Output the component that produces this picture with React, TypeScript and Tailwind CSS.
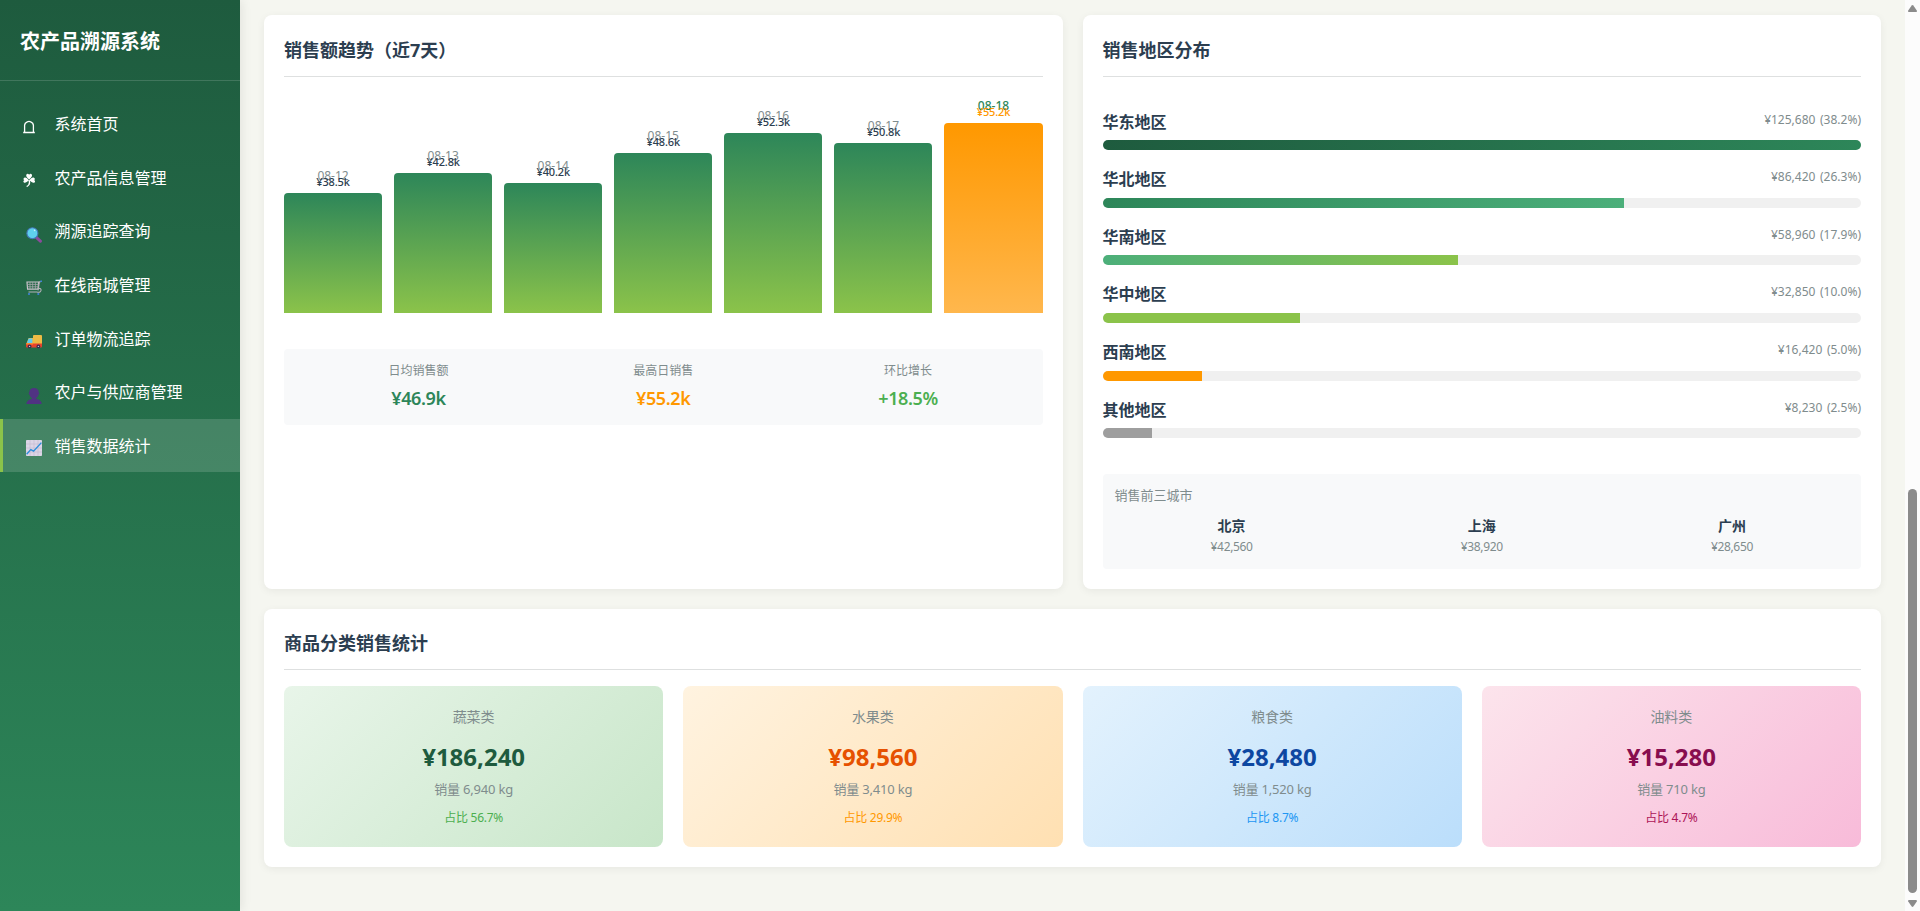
import type { ReactNode } from 'react';

const navItems: { label: string; icon: ReactNode }[] = [
  {
    label: '系统首页',
    icon: (
      <svg className="mt-[6px] h-4 w-4" viewBox="0 0 16 16" fill="none" stroke="#fff" strokeWidth="1.3">
        <path d="M0.2 14.5H11.8M1.6 14.5V7.2L2.3 5.2Q4.4 3.3 6 3.3T9.7 5.2L10.4 7.2V14.5" />
      </svg>
    ),
  },
  {
    label: '农产品信息管理',
    icon: (
      <svg className="mt-[4px] h-4 w-4" viewBox="0 0 16 16" fill="#fff">
        <g transform="translate(-0.6 0.5) scale(1.12)">
          <path d="M6 7.1C3.8 5.2 2.9 3.8 3.6 2.6C4.3 1.8 5.5 2 6 3C6.5 2 7.7 1.8 8.4 2.6C9.1 3.8 8.2 5.2 6 7.1Z" />
          <path d="M5.8 7.9C3.8 9.9 2.3 10.6 1.3 9.8C0.5 9 0.8 8 1.7 7.8C0.8 7.4 0.7 6.2 1.7 5.6C3 5 4.5 6.1 5.8 7.9Z" />
          <path d="M6.2 7.9C8.2 9.9 9.7 10.6 10.9 9.8C11.7 9 11.3 8 10.4 7.8C11.3 7.4 11.4 6.2 10.3 5.6C9 5 7.5 6.1 6.2 7.9Z" />
          <path d="M5.9 7.5C7 10.5 6 12.4 3.8 13.4" fill="none" stroke="#fff" strokeWidth="1.2" />
        </g>
      </svg>
    ),
  },
  {
    label: '溯源追踪查询',
    icon: (
      <svg className="mt-[8px] ml-[3px] h-4 w-4" viewBox="0 0 16 16">
        <path d="M10.3 10.3L14.4 14.2" stroke="#8b4a9c" strokeWidth="3" strokeLinecap="round" />
        <circle cx="6.4" cy="6.2" r="5.5" fill="#5fd0ee" stroke="#4677b8" strokeWidth="1.1" />
        <circle cx="8.6" cy="3.4" r="0.8" fill="#c5f1fb" />
      </svg>
    ),
  },
  {
    label: '在线商城管理',
    icon: (
      <svg className="mt-[8px] ml-[3px] h-4 w-4" viewBox="0 0 16 16" fill="none">
        <path d="M1 2H12.6L12 9.2H1.6Z" stroke="#c9c4cc" strokeWidth="1.2" />
        <path d="M4 2V9M6.7 2V9M9.4 2V9M1.3 4.4H12.5M1.5 6.8H12.2" stroke="#aaa7ad" strokeWidth="0.8" />
        <path d="M12 10.4L13.4 1.8H15M12.2 8.5Q15.5 8 15 10.5T10.8 12H2.5" stroke="#b6b1b9" strokeWidth="1.1" />
        <path d="M14.3 1.3H16" stroke="#3f82d8" strokeWidth="1.6" />
        <circle cx="3" cy="14" r="1.1" fill="#3f82d8" />
        <circle cx="12.3" cy="14" r="1.1" fill="#3f82d8" />
      </svg>
    ),
  },
  {
    label: '订单物流追踪',
    icon: (
      <svg className="mt-[9px] ml-[3px] h-4 w-4" viewBox="0 0 16 16">
        <path d="M7 2Q7 1 8 1H15Q16 1 16 2V10.4H7Z" fill="#edbb45" />
        <path d="M2.7 4H7V10.6H0.4V9.4Z" fill="#f2b23d" />
        <path d="M2.6 4.4H6.4V9H1Z" fill="#5dcdf2" />
        <path d="M0.2 9.6H16V12.2Q16 13.4 15 13.4H1Q0 13.4 0 12.4Z" fill="#e8422d" />
        <path d="M0.4 9H7V10.6H0.2Z" fill="#f98a2f" />
        <circle cx="3.6" cy="12.4" r="1.9" fill="#3a2c4f" />
        <circle cx="12.4" cy="12.4" r="1.9" fill="#3a2c4f" />
        <circle cx="3.6" cy="12.4" r="0.7" fill="#c8c2d2" />
        <circle cx="12.4" cy="12.4" r="0.7" fill="#c8c2d2" />
      </svg>
    ),
  },
  {
    label: '农户与供应商管理',
    icon: (
      <svg className="mt-[8px] ml-[3px] h-4 w-4" viewBox="0 0 16 16" fill="#503382">
        <path d="M8 0C11 0 12.9 1.6 12.7 4.5C13.5 4.5 13.4 6.5 12.4 6.7C12 8.6 11 9.4 10.2 10V11C13.8 11.5 15.5 13.2 15.7 16H0.4C0.6 13.2 2.3 11.5 5.8 11V10C5 9.4 4 8.6 3.6 6.7C2.6 6.5 2.5 4.5 3.3 4.5C3.1 1.6 5 0 8 0Z" />
      </svg>
    ),
  },
  {
    label: '销售数据统计',
    icon: (
      <svg className="mt-[6px] ml-[3px] h-4 w-4" viewBox="0 0 16 16" fill="none">
        <rect width="16" height="16" rx="0.8" fill="#dcd5e6" />
        <path d="M4 0V16M8 0V16M12 0V16M0 4H16M0 8H16M0 12H16" stroke="#c3b9d0" strokeWidth="0.6" />
        <path d="M0.6 14.2L4.8 9.6L7.6 11.2L15.4 2.6" stroke="#2c8edb" strokeWidth="1.4" />
      </svg>
    ),
  },
];

const days = [
  { date: '08-12', value: '¥38.5k', height: 120 },
  { date: '08-13', value: '¥42.8k', height: 140 },
  { date: '08-14', value: '¥40.2k', height: 130 },
  { date: '08-15', value: '¥48.6k', height: 160 },
  { date: '08-16', value: '¥52.3k', height: 180 },
  { date: '08-17', value: '¥50.8k', height: 170 },
  { date: '08-18', value: '¥55.2k', height: 190, today: true },
];

const summary = [
  { label: '日均销售额', value: '¥46.9k', color: 'text-[#2d8659]' },
  { label: '最高日销售', value: '¥55.2k', color: 'text-[#ff9800]' },
  { label: '环比增长', value: '+18.5%', color: 'text-[#4caf50]' },
];

const regions = [
  { name: '华东地区', value: '¥125,680 (38.2%)', width: 100, fill: 'bg-[linear-gradient(90deg,#1e5b3e,#2d8659)]' },
  { name: '华北地区', value: '¥86,420 (26.3%)', width: 68.8, fill: 'bg-[linear-gradient(90deg,#2d8659,#4caf7a)]' },
  { name: '华南地区', value: '¥58,960 (17.9%)', width: 46.9, fill: 'bg-[linear-gradient(90deg,#4caf7a,#8bc34a)]' },
  { name: '华中地区', value: '¥32,850 (10.0%)', width: 26.1, fill: 'bg-[#8bc34a]' },
  { name: '西南地区', value: '¥16,420 (5.0%)', width: 13.1, fill: 'bg-[#ff9800]' },
  { name: '其他地区', value: '¥8,230 (2.5%)', width: 6.5, fill: 'bg-[#9e9e9e]' },
];

const cities = [
  { name: '北京', value: '¥42,560' },
  { name: '上海', value: '¥38,920' },
  { name: '广州', value: '¥28,650' },
];

const categories = [
  { name: '蔬菜类', amount: '¥186,240', qty: '销量 6,940 kg', share: '占比 56.7%', bg: 'bg-[linear-gradient(135deg,#e8f5e9,#c8e6c9)]', strong: 'text-[#1e5b3e]', accent: 'text-[#4caf50]' },
  { name: '水果类', amount: '¥98,560', qty: '销量 3,410 kg', share: '占比 29.9%', bg: 'bg-[linear-gradient(135deg,#fff3e0,#ffe0b2)]', strong: 'text-[#e65100]', accent: 'text-[#ff9800]' },
  { name: '粮食类', amount: '¥28,480', qty: '销量 1,520 kg', share: '占比 8.7%', bg: 'bg-[linear-gradient(135deg,#e3f2fd,#bbdefb)]', strong: 'text-[#0d47a1]', accent: 'text-[#2196f3]' },
  { name: '油料类', amount: '¥15,280', qty: '销量 710 kg', share: '占比 4.7%', bg: 'bg-[linear-gradient(135deg,#fce4ec,#f8bbd9)]', strong: 'text-[#880e4f]', accent: 'text-[#ad1457]' },
];

function Sidebar() {
  return (
    <aside className="z-10 flex w-60 shrink-0 flex-col bg-[linear-gradient(180deg,#1e5b3e,#2d8659)] text-white shadow-[2px_0_10px_rgba(0,0,0,0.08)]">
      <h1 className="h-[81px] border-b border-white/15 px-5 pt-[26px] text-xl leading-8 font-bold">农产品溯源系统</h1>
      <nav className="mt-4 flex flex-col gap-px">
        {navItems.map((item, i) => (
          <a
            key={item.label}
            className={
              i === navItems.length - 1
                ? 'flex h-[52.67px] items-center border-l-[3px] border-[#8bc34a] bg-white/15 pl-5'
                : 'flex h-[52.67px] items-center border-l-[3px] border-transparent pl-5'
            }
          >
            <span className="flex w-[31.5px] shrink-0">{item.icon}</span>
            <span className="pt-[1.4px] text-base leading-6">{item.label}</span>
          </a>
        ))}
      </nav>
    </aside>
  );
}

function Card({ title, tight, children }: { title: string; tight?: boolean; children: ReactNode }) {
  return (
    <section className="flex min-w-0 flex-1 flex-col rounded-lg bg-white p-5 shadow-[0_2px_8px_rgba(0,0,0,0.06)]">
      <h2
        className={
          tight
            ? 'h-[41px] border-b border-[#dee0e0] text-lg leading-[29px] font-bold text-[#2c3e50]'
            : 'h-[42px] border-b border-[#dee0e0] text-lg leading-[31px] font-bold text-[#2c3e50]'
        }
      >
        {title}
      </h2>
      {children}
    </section>
  );
}

function TrendCard() {
  return (
    <Card title="销售额趋势（近7天）">
      <div className="flex h-[236px] items-end gap-3">
        {days.map((d) => (
          <div
            key={d.date}
            className={
              d.today
                ? 'relative flex-1 rounded-t bg-[linear-gradient(180deg,#ff9800,#ffb74d)]'
                : 'relative flex-1 rounded-t bg-[linear-gradient(180deg,#2d8659,#8bc34a)]'
            }
            style={{ height: d.height }}
          >
            <span
              className={
                d.today
                  ? 'absolute inset-x-0 -top-[27px] text-center text-xs leading-[19px] font-medium text-[#2d8659]'
                  : 'absolute inset-x-0 -top-[27px] text-center text-xs leading-[19px] text-[#7f8c8d]'
              }
            >
              {d.date}
            </span>
            <span
              className={
                d.today
                  ? 'absolute inset-x-0 -top-5 text-center text-[11px] leading-[18px] font-medium tracking-[-0.15px] text-[#ff9800]'
                  : 'absolute inset-x-0 -top-5 text-center text-[11px] leading-[18px] font-medium tracking-[-0.15px] text-[#2c3e50]'
              }
            >
              {d.value}
            </span>
          </div>
        ))}
      </div>
      <div className="mt-9 flex h-[76px] rounded bg-[#f8f9fa] px-3 pt-3 text-center">
        {summary.map((s) => (
          <div key={s.label} className="flex-1">
            <div className="text-xs leading-[19px] text-[#7f8c8d]">{s.label}</div>
            <div className={`mt-1 text-lg leading-[29px] font-semibold tracking-[-0.4px] ${s.color}`}>{s.value}</div>
          </div>
        ))}
      </div>
    </Card>
  );
}

function RegionCard() {
  return (
    <Card title="销售地区分布">
      <div className="mt-[31.6px] flex flex-col gap-4">
        {regions.map((r) => (
          <div key={r.name} className="flex flex-col gap-[6px]">
            <div className="flex h-[25.6px] items-start justify-between">
              <span className="text-base leading-[26.6px] font-semibold text-[#2c3e50]">{r.name}</span>
              <span className="pt-px text-xs leading-[20px] [word-spacing:1.5px] text-[#7f8c8d]">{r.value}</span>
            </div>
            <div className="h-[10px] overflow-hidden rounded-[5px] bg-[#f0f0f0]">
              <div className={`h-full ${r.fill}`} style={{ width: `${r.width}%` }} />
            </div>
          </div>
        ))}
      </div>
      <div className="mt-auto h-[95px] rounded bg-[#f8f9fa] p-3 text-[#7f8c8d]">
        <div className="text-[13px] leading-[19px]">销售前三城市</div>
        <div className="mt-[10px] flex gap-4 text-center">
          {cities.map((c) => (
            <div key={c.name} className="flex-1">
              <div className="text-sm leading-[22px] font-bold text-[#2c3e50]">{c.name}</div>
              <div className="text-xs leading-[19px] tracking-[-0.35px]">{c.value}</div>
            </div>
          ))}
        </div>
      </div>
    </Card>
  );
}

function CategoryCard() {
  return (
    <Card title="商品分类销售统计" tight>
      <div className="mt-4 grid grid-cols-4 gap-5">
        {categories.map((c) => (
          <div key={c.name} className={`flex h-[161px] flex-col items-center rounded-lg pt-5 text-[#7f8c8d] ${c.bg}`}>
            <div className="text-sm leading-[22px]">{c.name}</div>
            <div className={`mt-[10px] text-2xl leading-[38px] font-bold ${c.strong}`}>{c.amount}</div>
            <div className="mt-[3px] text-[13px] leading-[21px] tracking-[-0.2px]">{c.qty}</div>
            <div className={`mt-2 text-xs leading-[19px] tracking-[-0.25px] ${c.accent}`}>{c.share}</div>
          </div>
        ))}
      </div>
    </Card>
  );
}

function Scrollbar() {
  return (
    <div className="flex w-[15px] shrink-0 flex-col items-center bg-[#fcfcfc]">
      <svg className="mt-[5px] h-[7px] w-[9px] shrink-0" viewBox="0 0 9 7" fill="#8b8b8b">
        <path d="M3.7 0.5Q4.5 -0.3 5.3 0.5L8.8 5.5Q9.2 7 8 7H1Q-0.2 7 0.2 5.5Z" />
      </svg>
      <div className="mt-[477px] h-[404px] w-[9px] shrink-0 rounded-full bg-[#8b8b8b]" />
      <svg className="mt-[7px] h-[7px] w-[9px] shrink-0" viewBox="0 0 9 7" fill="#8b8b8b">
        <path d="M3.7 6.5Q4.5 7.3 5.3 6.5L8.8 1.5Q9.2 0 8 0H1Q-0.2 0 0.2 1.5Z" />
      </svg>
    </div>
  );
}

export default function App() {
  return (
    <div className="flex h-[911px] w-[1920px] overflow-hidden bg-[#f5f6f0] font-['Noto_Sans','Noto_Sans_CJK_SC',sans-serif]">
      <Sidebar />
      <main className="flex min-w-0 flex-1 flex-col gap-5 px-6 pt-[15px]">
        <div className="flex h-[574px] gap-5">
          <TrendCard />
          <RegionCard />
        </div>
        <div className="flex h-[258px]">
          <CategoryCard />
        </div>
      </main>
      <Scrollbar />
    </div>
  );
}
